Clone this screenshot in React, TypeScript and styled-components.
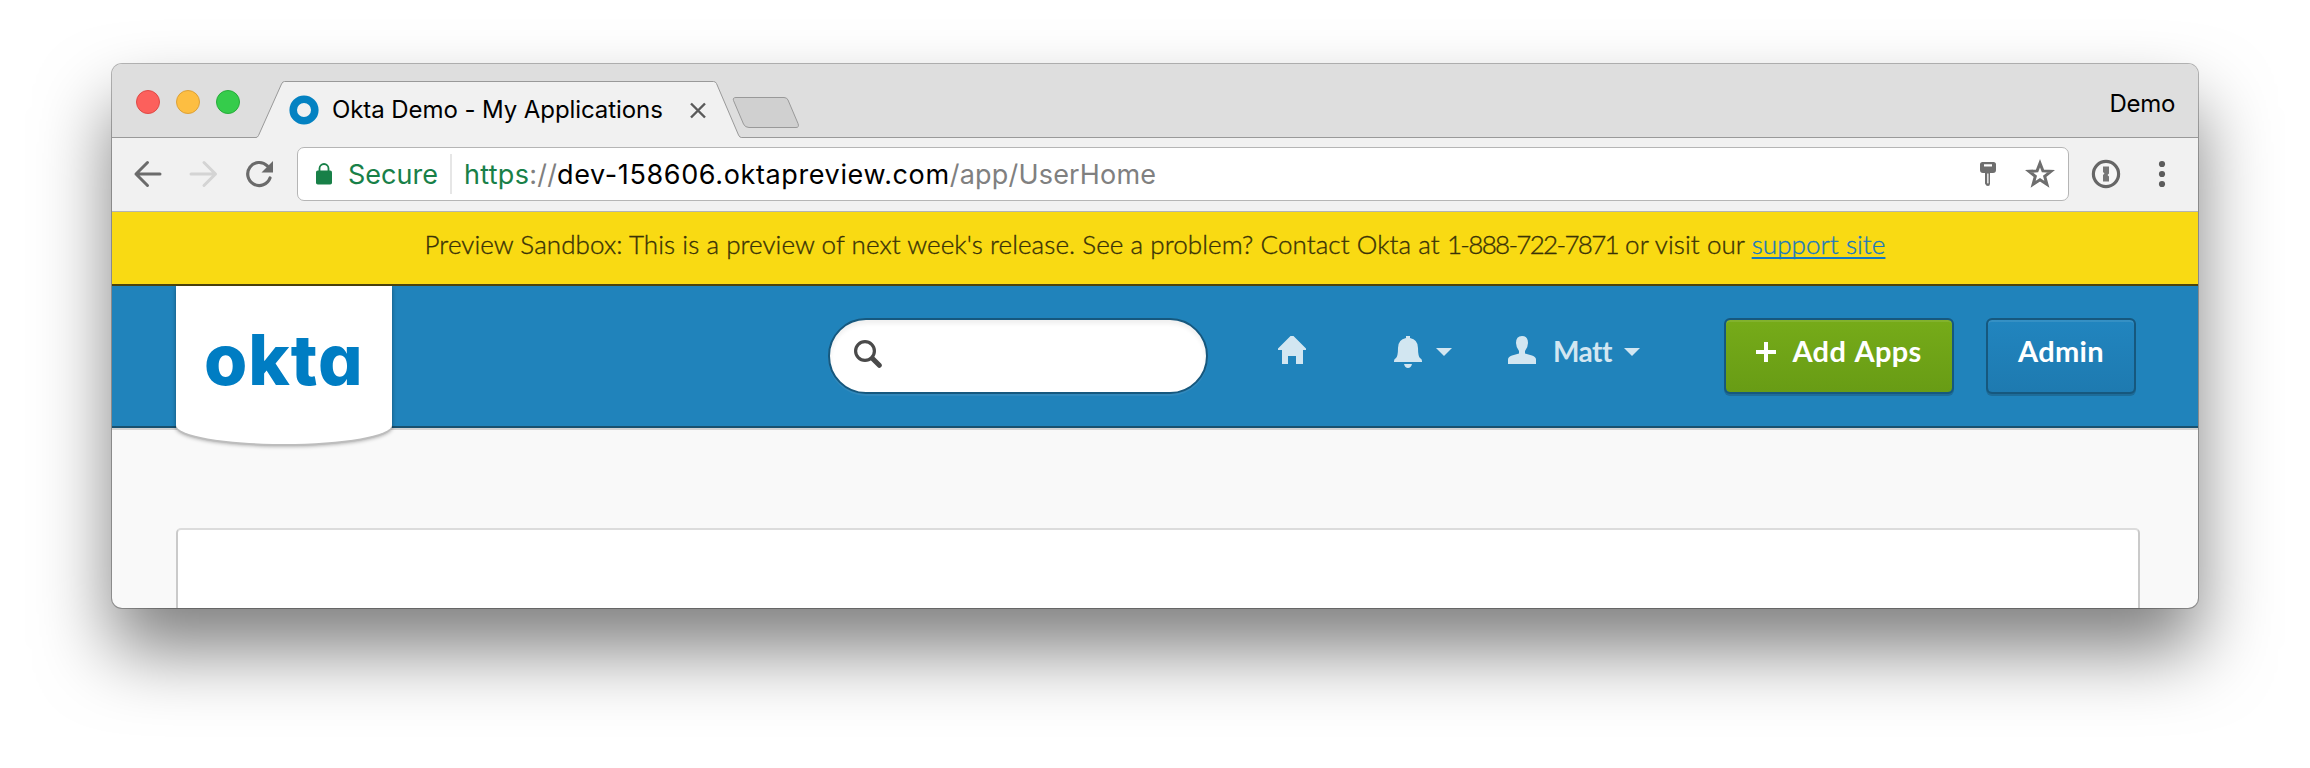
import React from 'react';
import styled, { createGlobalStyle } from 'styled-components';

const GlobalStyle = createGlobalStyle`
  *, *::before, *::after { box-sizing: border-box; }
  body { margin: 0; background: #fff; overflow: hidden; }
`;

const chromeFont = `Inter, "Liberation Sans", sans-serif`;
const pageFont = `Lato, "Open Sans", sans-serif`;

const Desktop = styled.main`
  width: 2310px;
  height: 768px;
  padding: 64px 112px 0;
  overflow: hidden;
  background: #fff;
`;

const BrowserWindow = styled.section`
  display: flex;
  flex-direction: column;
  width: 2086px;
  height: 544px;
  border-radius: 10px;
  overflow: hidden;
  background: #f9f9f9;
  box-shadow: 0 0 0 1px rgba(0, 0, 0, 0.28), 0 42px 72px rgba(0, 0, 0, 0.5);
`;

const TabStrip = styled.div`
  flex: none;
  display: flex;
  height: 74px;
  background: #dedede;
  box-shadow: inset 0 -1px 0 #999;
  font-family: ${chromeFont};
  font-size: 24px;
  color: #000;
`;

const TrafficLights = styled.div`
  display: flex;
  gap: 16px;
  padding: 26px 0 0 24px;
  width: 144px;
`;

const Light = styled.span<{ $fill: string; $edge: string }>`
  width: 24px;
  height: 24px;
  border-radius: 50%;
  background: ${(p) => p.$fill};
  border: 1px solid ${(p) => p.$edge};
`;

const Tab = styled.div`
  position: relative;
  display: flex;
  align-items: center;
  width: 486px;
  height: 57px;
  margin-top: 17px;
  padding-left: 33px;
`;

const TabShape = styled.svg`
  position: absolute;
  inset: 0;
`;

const TabIcon = styled.svg`
  position: relative;
  flex: none;
`;

const TabTitle = styled.span`
  position: relative;
  width: 330px;
  margin: 0 27px 0 13px;
  white-space: nowrap;
  letter-spacing: -0.08px;
`;

const NewTab = styled.svg`
  margin: 32px 0 0 -11px;
`;

const Profile = styled.span`
  margin: 25px 23px 0 auto;
  line-height: 30px;
  letter-spacing: -0.3px;
`;

const Toolbar = styled.div`
  flex: none;
  display: flex;
  align-items: center;
  height: 74px;
  padding: 0 32px 2px 19px;
  background: #f1f1f1;
  border-bottom: 1px solid #b4b4b4;
`;

const NavIcons = styled.div`
  flex: none;
  display: flex;
  gap: 24px;
  width: 166px;
`;

const AddressBar = styled.div`
  flex: none;
  display: flex;
  align-items: center;
  width: 1772px;
  height: 54px;
  margin-bottom: -1px;
  padding: 0 13px 0 18px;
  background: #fff;
  border: 1px solid #b5b5b5;
  border-radius: 7px;
  font-family: ${chromeFont};
  font-size: 27px;
  line-height: 40px;
  white-space: nowrap;
`;

const Secure = styled.span`
  width: 102px;
  margin: 2px 0 0 16px;
  color: #188048;
`;

const Divider = styled.span`
  width: 2px;
  height: 40px;
  background: #e6e6e6;
`;

const Url = styled.span`
  flex: 1;
  margin: 2px 0 0 12px;
  color: #000;
  letter-spacing: 0.62px;
`;

const Scheme = styled.span`
  color: #188048;
  letter-spacing: 0.3px;
`;

const Muted = styled.span`
  color: #808080;
  letter-spacing: 0.2px;
`;

const BarActions = styled.div`
  display: flex;
  align-items: center;
  gap: 28px;
`;

const Extensions = styled.div`
  flex: none;
  display: flex;
  align-items: center;
  gap: 36px;
  margin-left: 21px;
`;

const Banner = styled.p`
  flex: none;
  height: 74px;
  margin: 0;
  padding-bottom: 8px;
  background: #f9da13;
  border-bottom: 2px solid #4c430e;
  color: #3a3207;
  font-family: ${pageFont};
  font-size: 26px;
  font-weight: 300;
  letter-spacing: 0.07px;
  line-height: 64px;
  text-align: center;
  white-space: nowrap;
  -webkit-text-stroke: 0.35px currentColor;
`;

const Phone = styled.span`
  letter-spacing: -1.7px;
`;

const BannerLink = styled.a`
  color: #1879bf;
  text-decoration: underline;
  text-decoration-thickness: 2px;
  text-underline-offset: 3px;
  text-decoration-skip-ink: none;
`;

const Header = styled.header`
  position: relative;
  flex: none;
  display: flex;
  align-items: center;
  height: 142px;
  padding: 0 62px 0 64px;
  background: #2083bb;
  border-bottom: 2px solid #19516f;
  box-shadow: 0 2px 0 #d2d2d2;
  font-family: ${pageFont};
`;

const LogoFlap = styled.div`
  align-self: flex-start;
  width: 216px;
  height: 158px;
  margin-bottom: -20px;
  border-radius: 0 0 50% 50% / 0 0 19px 19px;
  background: #fff;
  box-shadow: 0 2px 0 #bdbdbd, 0 2px 4px rgba(0, 0, 0, 0.4);
  overflow: hidden;
`;

const LogoText = styled.span`
  display: block;
  margin-left: 28px;
  padding-top: 34px;
  font-family: Inter, sans-serif;
  font-size: 70px;
  font-weight: 800;
  font-feature-settings: 'cv11';
  line-height: 80px;
  letter-spacing: 1px;
  color: #007dc3;
`;

const SearchBox = styled.div`
  display: flex;
  width: 380px;
  height: 76px;
  margin-left: 436px;
  padding: 20px 24px;
  border: 2px solid #16587e;
  border-radius: 38px;
  background: #fff;
  box-shadow: inset 0 4px 4px rgba(0, 0, 0, 0.06), 0 2px 0 #3189bd;
`;

const Menu = styled.nav`
  display: flex;
  align-items: flex-start;
  width: 446px;
  height: 40px;
  margin: 0 0 0 70px;
  color: #d2e6f1;
`;

const MenuItem = styled.div<{ $width: number }>`
  display: flex;
  align-items: flex-start;
  width: ${(p) => p.$width}px;
`;

const UserName = styled.span`
  width: 71px;
  margin-left: 17px;
  font-size: 28px;
  font-weight: 700;
  line-height: 30px;
  letter-spacing: -0.5px;
`;

const CaretIcon = styled.svg`
  margin-top: 12px;
`;

const Button = styled.button<{ $width: number; $primary?: boolean }>`
  display: flex;
  align-items: center;
  justify-content: center;
  width: ${(p) => p.$width}px;
  height: 76px;
  padding: 0 0 12px;
  border: 2px solid #16587e;
  border-radius: 6px;
  background: ${(p) =>
    p.$primary ? 'linear-gradient(#76ab19, #689c15)' : 'linear-gradient(#2185bf, #1e7ab0)'};
  background-clip: padding-box;
  background-color: #16587e;
  box-shadow: inset 0 2px 0 rgba(255, 255, 255, 0.09), 0 2px 0 #1d6c99;
  color: #fff;
  font-family: ${pageFont};
  font-size: 29px;
  font-weight: 700;
  letter-spacing: 0.3px;
  word-spacing: 2px;
  white-space: nowrap;
`;

const Actions = styled.div`
  display: flex;
  gap: 32px;
`;

const PlusIcon = styled.svg`
  margin: 4px 16px 0 0;
`;

const Content = styled.div`
  flex: 1;
  padding: 100px 58px 0 64px;
`;

const Panel = styled.div`
  height: 120px;
  border: 2px solid #cacaca;
  border-top-color: #dcdcdc;
  border-radius: 5px;
  background: #fff;
`;

const Caret = () => (
  <CaretIcon width="16" height="8" viewBox="0 0 16 8" fill="currentColor">
    <path d="M0 0h16L8 8z" />
  </CaretIcon>
);

const ArrowIcon = ({ forward, color }: { forward?: boolean; color: string }) => (
  <svg width="32" height="32" viewBox="0 0 32 32" fill="none" stroke={color} strokeWidth="3" strokeLinecap="round" strokeLinejoin="round">
    <path d={forward ? 'M4 16h24.500M17 4.500 28.500 16 17 27.500' : 'M29 16h-24M16.500 4.500 5 16 16.500 27.500'} />
  </svg>
);

export default function App() {
  return (
    <>
      <GlobalStyle />
      <Desktop>
        <BrowserWindow>
          <TabStrip>
            <TrafficLights>
              <Light $fill="#fc605c" $edge="#df4a46" />
              <Light $fill="#fdbe41" $edge="#dda137" />
              <Light $fill="#35cc4b" $edge="#27ac3a" />
            </TrafficLights>
            <Tab>
              <TabShape width="486" height="57" viewBox="0 0 486 57">
                <path d="M0 57v-.5q1.500 0 2.500-2L25.500 3q1-2.500 3-2.500h429q2 0 3 2l22 51.500q1 2.500 3 2.500V57z" fill="#f1f1f1" />
                <path d="M0 56.500q1.500 0 2.500-2L25.500 3q1-2.500 3-2.500h429q2 0 3 2l22 51.500q1 2.500 3 2.500" fill="none" stroke="#999" />
              </TabShape>
              <TabIcon width="30" height="30" viewBox="0 0 30 30">
                <circle cx="15" cy="15" r="10.800" fill="none" stroke="#0482c2" strokeWidth="7.600" />
              </TabIcon>
              <TabTitle>Okta Demo - My Applications</TabTitle>
              <TabIcon width="18" height="18" viewBox="0 0 18 18" fill="none" stroke="#5a5a5a" strokeWidth="2.400">
                <path d="m2 2.500 14 14M16 2.500l-14 14" />
              </TabIcon>
            </Tab>
            <NewTab width="68" height="34" viewBox="0 0 68 34">
              <path d="M5 1.500h48q3 0 4 2.500l10 23.500q1.500 4-2 4H18q-4 0-5.500-3.500L2.500 4.500q-1-3 2.500-3z" fill="#d0d0d0" stroke="#999" />
            </NewTab>
            <Profile>Demo</Profile>
          </TabStrip>

          <Toolbar>
            <NavIcons>
              <ArrowIcon color="#6b6b6b" />
              <ArrowIcon forward color="#d4d4d4" />
              <svg width="32" height="32" viewBox="0 0 32 32" fill="none">
                <path d="M27 20a11.500 11.500 0 1 1-2.700-12.200" stroke="#6b6b6b" strokeWidth="3.200" strokeLinecap="round" />
                <path d="M30 3v11.500H18.500z" fill="#6b6b6b" />
              </svg>
            </NavIcons>
            <AddressBar>
              <svg width="16" height="22" viewBox="0 0 16 22">
                <path d="M3.500 9V5.500a4.500 4.500 0 0 1 9 0V9" fill="none" stroke="#188048" strokeWidth="1.800" />
                <rect y="7.500" width="16" height="14" rx="1.800" fill="#188048" />
              </svg>
              <Secure>Secure</Secure>
              <Divider />
              <Url>
                <Scheme>https</Scheme>
                <Muted>://</Muted>dev-158606.oktapreview.com<Muted>/app/UserHome</Muted>
              </Url>
              <BarActions>
                <svg width="18" height="26" viewBox="0 0 18 26" fill="#6e6e6e">
                  <path fillRule="evenodd" d="M3.500 1h11Q17 1 17 3.500V9q0 3-3 3h-3v10.500q0 2.500-2 2.500t-3-2.500V12H4q-3 0-3-3V3.500Q1 1 3.500 1zM5 3.200v2.300h8V3.200zM8.200 12.500V22q1 1.200 1.300 0v-9.500z" />
                </svg>
                <svg width="30" height="30" viewBox="0 0 30 30" fill="none" stroke="#6e6e6e" strokeWidth="3">
                  <path d="m15 4.300 2.900 7.600 8.200.4-6.400 5.100 2.200 7.900-6.900-4.500-6.900 4.500 2.200-7.900-6.400-5.100 8.200-.4z" />
                </svg>
              </BarActions>
            </AddressBar>
            <Extensions>
              <svg width="32" height="32" viewBox="0 0 32 32">
                <circle cx="16" cy="16" r="12.600" fill="#f6f6f6" stroke="#666" strokeWidth="3.200" />
                <path d="M13 8.500h6v7l-1.500 1.500 1.500 1.500v5h-6v-6.500l1.500-1.500-1.500-1.500z" fill="#777" />
              </svg>
              <svg width="8" height="28" viewBox="0 0 8 28" fill="#5c5c5c">
                <circle cx="4" cy="4" r="3.100" />
                <circle cx="4" cy="14" r="3.100" />
                <circle cx="4" cy="24" r="3.100" />
              </svg>
            </Extensions>
          </Toolbar>

          <Banner>
            Preview Sandbox: This is a preview of next week's release. See a problem? Contact Okta at{' '}
            <Phone>1-888-722-7871</Phone> or visit our <BannerLink>support site</BannerLink>
          </Banner>

          <Header>
            <LogoFlap>
              <LogoText>okta</LogoText>
            </LogoFlap>
            <SearchBox>
              <svg width="28" height="28" viewBox="0 0 28 28" fill="none" stroke="#4a4a4a" strokeLinecap="round">
                <circle cx="11" cy="11" r="9.400" strokeWidth="3.200" />
                <path d="m18.500 18.500 6.800 6.800" strokeWidth="5" />
              </svg>
            </SearchBox>
            <Menu>
              <MenuItem $width={116}>
                <svg width="28" height="28" viewBox="0 0 28 28" fill="currentColor">
                  <path d="M12.500 0h3L28 12.500V14h-3v14h-7v-8h-8v8H4V14H0v-1.500z" />
                </svg>
              </MenuItem>
              <MenuItem $width={114}>
                <svg width="42" height="32" viewBox="0 0 42 32" fill="currentColor">
                  <path d="M12 0h4v2q8 1.500 8 10 0 8 2 10 2 1 2 3v1H0v-1q0-2 2-3 2-2 2-10 0-8.500 8-10zM10 28h8q-1 4-4 4t-4-4z" />
                </svg>
                <Caret />
              </MenuItem>
              <MenuItem $width={140}>
                <svg width="28" height="28" viewBox="0 0 28 28" fill="currentColor">
                  <path d="M14 0q6 0 6 7 0 4-3 8v2.500l7 2q4 1.500 4 4V28H0v-4.500q0-2.500 4-4l7-2V15Q8 11 8 7q0-7 6-7z" />
                </svg>
                <UserName>Matt</UserName>
                <Caret />
              </MenuItem>
            </Menu>
            <Actions>
              <Button $width={230} $primary>
                <PlusIcon width="20" height="20" viewBox="0 0 20 20" fill="none" stroke="#fff" strokeWidth="4">
                  <path d="M10 0v20M0 10h20" />
                </PlusIcon>
                Add Apps
              </Button>
              <Button $width={150}>Admin</Button>
            </Actions>
          </Header>

          <Content>
            <Panel />
          </Content>
        </BrowserWindow>
      </Desktop>
    </>
  );
}
